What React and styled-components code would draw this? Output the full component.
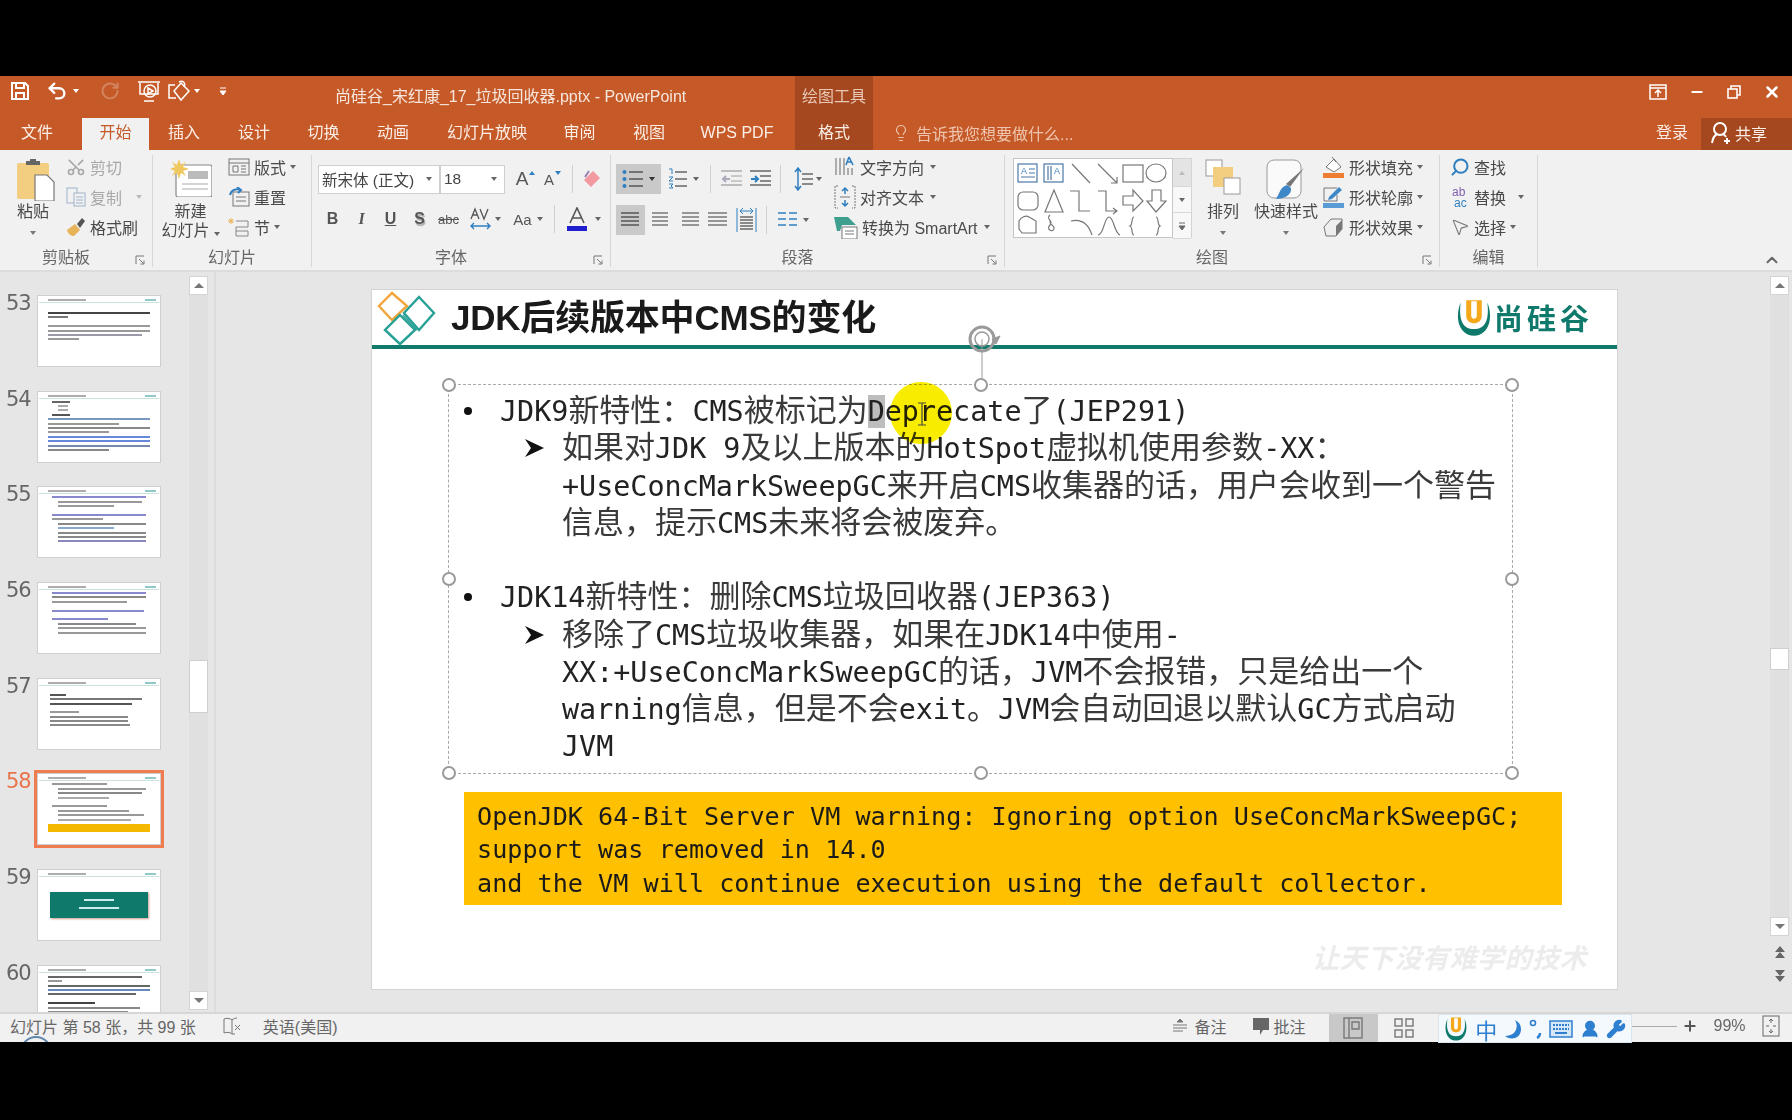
import React from "react";
import styled, { createGlobalStyle } from "styled-components";
import { Scissors, Search, MousePointer2, Lightbulb, Undo2, RotateCw, Minus, X, Wrench, UserRound, Plus, ChevronUp } from "lucide-react";

const UI = `"Liberation Sans", "Noto Sans CJK SC", sans-serif`;
const MONO = `"DejaVu Sans Mono", "Liberation Mono", monospace`;
const CJK = `"Noto Sans CJK SC", sans-serif`;
const ORANGE = "#c55a28";
const DARK = "#a5481f";
const TEAL = "#0f7a6c";
const TXT = "#4a4a4a";

const Global = createGlobalStyle`
  html, body { margin: 0; background: #000; }
  body { font-family: ${UI}; overflow: hidden; }
  * { box-sizing: border-box; }
`;

const Screen = styled.div`
  width: 1792px;
  height: 1120px;
  background: #000;
  padding-top: 76px;
`;
const Win = styled.div`
  height: 966px;
  display: flex;
  flex-direction: column;
  background: #e6e6e6;
`;

/* title bar */
const TitleBar = styled.div`
  height: 42px;
  display: flex;
  background: ${ORANGE};
  color: #f6e6dd;
`;
const Qat = styled.div`
  width: 335px;
  display: flex;
  align-items: center;
  padding: 0 0 12px 10px;
  color: #fff;
`;
const QatSlot = styled.span`
  display: flex;
  align-items: center;
  margin-right: ${(p) => p.$mr || 0}px;
  opacity: ${(p) => p.$dim ? 0.25 : 1};
`;
const TitleText = styled.div`
  width: 460px;
  line-height: 42px;
  font-size: 16px;
  white-space: nowrap;
`;
const ToolTab = styled.div`
  width: 78px;
  background: ${DARK};
  font-size: 16px;
  line-height: 42px;
  text-align: center;
  color: #e8c8b6;
`;
const WinBtns = styled.div`
  margin-left: auto;
  display: flex;
  align-items: center;
  padding: 0 11px 10px 0;
  gap: 22px;
  color: #fff;
`;

/* tabs */
const TabBar = styled.div`
  height: 32px;
  display: flex;
  background: ${ORANGE};
  color: #fbeee7;
  font-size: 16px;
`;
const Tab = styled.div`
  width: ${(p) => p.$w}px;
  text-align: center;
  line-height: 30px;
  padding-right: ${(p) => p.$pr || 0}px;
  white-space: nowrap;
  background: ${(p) => p.$active ? "#f1f1f1" : p.$tool ? DARK : "transparent"};
  color: ${(p) => p.$active ? ORANGE : "#fbeee7"};
`;
const Tell = styled.div`
  display: flex;
  align-items: center;
  gap: 6px;
  margin-left: 19px;
  padding-bottom: 3px;
  font-size: 16px;
  color: #eec4ae;
`;
const Login = styled.div`
  margin-left: auto;
  width: 78px;
  line-height: 30px;
  padding-left: 33px;
  white-space: nowrap;
`;
const Share = styled.div`
  width: 91px;
  background: ${DARK};
  display: flex;
  align-items: center;
  gap: 3px;
  padding: 0 0 3px 9px;
  white-space: nowrap;
`;

/* ribbon */
const Ribbon = styled.div`
  height: 122px;
  display: flex;
  background: #f1f1f1;
  border-bottom: 2px solid #dcdcdc;
  color: ${TXT};
  font-size: 16px;
`;
const Group = styled.section`
  position: relative;
  width: ${(p) => p.$w}px;
  height: 112px;
  margin-top: 5px;
  display: flex;
  flex-direction: column;
  border-right: 1px solid #d6d6d6;
`;
const GroupBody = styled.div`
  height: 97px;
  margin-top: -3px;
  display: flex;
  padding-left: ${(p) => p.$pl || 0}px;
`;
const GroupLabel = styled.div`
  position: relative;
  text-align: center;
  line-height: 18px;
  margin-top: 4px;
  padding-right: ${(p) => p.$pr || 0}px;
  color: #666;
`;
const Launcher = styled.svg`
  position: absolute;
  right: 7px;
  top: 6px;
`;
const BigBtn = styled.div`
  width: ${(p) => p.$w}px;
  display: flex;
  flex-direction: column;
  align-items: center;
  line-height: 19px;
  white-space: nowrap;
`;
const BigIcon = styled.div`
  height: 50px;
  padding-top: 7px;
  margin-left: ${(p) => p.$ml || 0}px;
`;
const BigCaret = styled.i`
  display: block;
  width: 0;
  height: 0;
  margin-top: 10px;
  border-left: 3.5px solid transparent;
  border-right: 3.5px solid transparent;
  border-top: 4px solid #777;
`;
const Stack = styled.div`
  width: ${(p) => p.$w ? `${p.$w}px` : "auto"};
  margin-left: ${(p) => p.$ml || 0}px;
  display: flex;
  flex-direction: column;
`;
const Item = styled.div`
  height: 30px;
  display: flex;
  align-items: center;
  gap: ${(p) => p.$gap ?? 4}px;
  white-space: nowrap;
  color: ${(p) => p.$off ? "#a8a8a8" : TXT};
`;
const Caret = styled.i`
  display: inline-block;
  width: 0;
  height: 0;
  margin-left: ${(p) => p.$ml ?? 5}px;
  border-left: 3.5px solid transparent;
  border-right: 3.5px solid transparent;
  border-top: 4px solid ${(p) => p.$c || "#666"};
`;
const Tools = styled.div`
  display: flex;
  align-items: center;
  height: 30px;
  margin-top: ${(p) => p.$mt || 0}px;
`;
const Tool = styled.div`
  width: ${(p) => p.$w || 29}px;
  height: 30px;
  margin-left: ${(p) => p.$ml || 0}px;
  display: flex;
  align-items: center;
  justify-content: center;
  background: ${(p) => p.$on ? "#c9c9c9" : "transparent"};
  color: #555;
`;
const Vsep = styled.span`
  width: 1px;
  height: 28px;
  margin-left: ${(p) => p.$ml || 0}px;
  background: #d0d0d0;
`;
const SerifGlyph = styled.span`
  font: italic 700 16px "Liberation Serif", serif;
`;
const SansGlyph = styled.span`
  font-family: "Liberation Sans", sans-serif;
  font-size: ${(p) => p.$s || 16}px;
  color: ${(p) => p.$c || "#555"};
  font-weight: ${(p) => p.$b ? 700 : 400};
`;
const Shadowed = styled(SansGlyph)`
  text-shadow: 1px 2px 1px #aaa;
`;
const Struck = styled(SansGlyph)`
  text-decoration: line-through;
`;
const Raised = styled.i`
  display: inline-block;
  width: 0;
  height: 0;
  margin: -12px 0 0 1px;
  border-left: 3.5px solid transparent;
  border-right: 3.5px solid transparent;
  border-${(p) => p.$down ? "top" : "bottom"}: 4px solid #2f7fc0;
`;
const Combo = styled.div`
  width: ${(p) => p.$w}px;
  height: 29px;
  background: #fff;
  border: 1px solid #cfcfcf;
  display: flex;
  align-items: center;
  justify-content: space-between;
  padding: 0 7px 0 3px;
  font-size: 15.5px;
  color: #444;
  white-space: nowrap;
`;
const Gallery = styled.div`
  width: 160px;
  height: 80px;
  margin-top: 6px;
  background: #fff;
  border: 1px solid #c6c6c6;
`;
const GalleryScroll = styled.div`
  width: 19px;
  height: 80px;
  margin-top: 6px;
  display: grid;
  grid-template-rows: 28px 26px 26px;
  border: 1px solid #d4d4d4;
  border-left: 0;
`;
const GalleryCell = styled.div`
  display: flex;
  align-items: center;
  justify-content: center;
  background: ${(p) => p.$dim ? "#e4e4e4" : "#f8f8f8"};
  border-bottom: 1px solid #d8d8d8;
`;
const CaretUp = styled(Caret)`
  border-top: 0;
  border-bottom: 4px solid #bbb;
  margin: 0;
`;
const Rest = styled.div`
  flex: 1;
  display: flex;
  align-items: flex-end;
  justify-content: flex-end;
  padding: 0 11px 1px 0;
  color: #666;
`;

/* main */
const Main = styled.div`
  flex: 1;
  display: flex;
  border-bottom: 2px solid #d6d6d6;
  min-height: 0;
`;
const Panel = styled.aside`
  width: 216px;
  display: flex;
  border-right: 2px solid #dcdcdc;
`;
const ThumbList = styled.div`
  width: 189px;
  height: 740px;
  overflow: hidden;
  padding-top: 23px;
`;
const ThumbRow = styled.div`
  height: 95.7px;
  display: flex;
`;
const Num = styled.div`
  width: 37px;
  padding-left: 6px;
  font: 21px/16px "DejaVu Sans", sans-serif;
  letter-spacing: -1px;
  color: ${(p) => p.$on ? "#e9744a" : "#666"};
`;
const Thumb = styled.div`
  width: 124px;
  height: 72px;
  flex: none;
  background: #fff;
  border: 1px solid #cfcfcf;
  padding: 3px 10px;
  overflow: hidden;
  display: flex;
  flex-direction: column;
  outline: ${(p) => p.$on ? "3px solid #f07d50" : "none"};
`;
const ThumbHead = styled.div`
  display: flex;
  justify-content: space-between;
  height: 4px;
  margin: 0 -9px ${(p) => p.$gap ?? 5}px;
  padding: 0 3px 1px 9px;
  border-bottom: 1px solid #bcdcd6;
  flex: none;
  opacity: 0.8;
`;
const Bar = styled.div`
  height: 2px;
  width: ${(p) => p.$w}%;
  margin: 0 0 2.4px ${(p) => p.$in || 0}px;
  background: ${(p) => p.$c || "#8a8a8a"};
  filter: blur(0.4px);
  flex: none;
`;
const ThumbTeal = styled.div`
  height: 26px;
  margin: 10px 2px 0;
  background: ${TEAL};
  display: flex;
  flex-direction: column;
  align-items: center;
  justify-content: center;
  gap: 3px;
  box-shadow: 1px 1px 2px #c98;
`;
const ThumbYellow = styled.div`
  height: 8px;
  margin: 1px 0 0;
  background: #f5b800;
  flex: none;
`;
const VScroll = styled.div`
  width: 19px;
  margin-top: 4px;
  height: 734px;
  background: #e0e0e0;
  position: relative;
`;
const ScrollBtn = styled.div`
  height: 19px;
  background: #fff;
  border: 1px solid #d4d4d4;
  display: flex;
  align-items: center;
  justify-content: center;
`;
const ScrollEnd = styled(ScrollBtn)`
  position: absolute;
  left: 0;
  right: 0;
  bottom: 0;
`;
const ScrollThumb = styled.div`
  position: absolute;
  left: 0;
  top: ${(p) => p.$top}px;
  width: 19px;
  height: ${(p) => p.$h}px;
  background: #fff;
  border: 1px solid #cfcfcf;
`;
const CaretDown = styled(Caret)`
  margin: 0;
  border-left-width: 5px;
  border-right-width: 5px;
  border-top-width: 5px;
  border-top-color: #777;
`;
const CaretTop = styled(CaretDown)`
  border-top: 0;
  border-bottom: 5px solid #777;
`;
const Canvas = styled.main`
  flex: 1;
  padding: 17px 0 0 155px;
`;
const SlideSheet = styled.div`
  position: relative;
  width: 1247px;
  height: 701px;
  background: #fff;
  border: 1px solid #d4d4d4;
  display: flex;
  flex-direction: column;
`;
const SlideHead = styled.header`
  height: 59px;
  flex: none;
  display: flex;
  align-items: center;
  padding: 0 24px 0 4px;
  border-bottom: 4px solid ${TEAL};
`;
const SlideTitle = styled.h1`
  margin: 0 0 0 15px;
  font: 700 35px/1 ${UI};
  color: #1a1a1a;
  letter-spacing: -0.2px;
  white-space: nowrap;
`;
const Brand = styled.div`
  margin-left: auto;
  display: flex;
  align-items: center;
  font: 700 29px/1 ${CJK};
  color: ${TEAL};
  letter-spacing: 4px;
`;
const TextBox = styled.div`
  position: relative;
  width: 1065px;
  height: 390px;
  margin: 35px 0 0 76px;
  padding-top: 7px;
  border: 1px dashed #a8a8a8;
  color: #222;
  font: 28.4px/37.3px ${MONO};
  flex: none;
`;
const Line = styled.div`
  white-space: nowrap;
  padding-left: ${(p) => p.$lv === 1 ? 51 : 113}px;
  position: relative;
  height: 37.3px;
`;
const Spacer = styled.div`
  height: 37.3px;
`;
const Dot = styled.span`
  position: absolute;
  left: 15px;
  top: 15px;
  width: 8px;
  height: 8px;
  border-radius: 50%;
  background: #111;
`;
const ArrowMark = styled.svg`
  position: absolute;
  left: 75px;
  top: 9px;
`;
const Han = styled.span`
  display: inline-block;
  font-family: ${CJK};
  font-size: 31px;
  line-height: 1;
  color: #3a3a3a;
`;
const Picked = styled.span`
  background: #bdbdbd;
`;
const Spot = styled.div`
  position: absolute;
  left: 441px;
  top: -3px;
  width: 62px;
  height: 62px;
  border-radius: 50%;
  background: #f8ec00;
  mix-blend-mode: multiply;
`;
const Beam = styled.svg`
  position: absolute;
  left: 467px;
  top: 17px;
`;
const Handle = styled.span`
  position: absolute;
  left: ${(p) => p.$x}%;
  top: ${(p) => p.$y}%;
  width: 14px;
  height: 14px;
  margin: -7px 0 0 -7px;
  border-radius: 50%;
  background: #fff;
  border: 2px solid #9a9a9a;
`;
const RotateMark = styled.svg`
  position: absolute;
  left: 516px;
  top: -60px;
`;
const Warning = styled.div`
  width: 1098px;
  height: 113px;
  margin: 18px 0 0 92px;
  padding: 8px 0 0 13px;
  background: #ffc000;
  color: #1a1a1a;
  font: 25.15px/33.4px ${MONO};
  white-space: pre;
  flex: none;
`;
const Motto = styled.div`
  margin: auto 30px 19px auto;
  font: italic 700 27px/1 ${CJK};
  letter-spacing: 0.5px;
  color: #ececec;
  white-space: nowrap;
`;
const RightBar = styled.div`
  width: 22px;
  margin-left: auto;
  padding-top: 4px;
  position: relative;
  display: flex;
  flex-direction: column;
`;
const RightTrack = styled.div`
  height: 660px;
  display: flex;
  flex-direction: column;
  justify-content: space-between;
  width: 19px;
  background: #e0e0e0;
  position: relative;
`;
const PageJump = styled.div`
  width: 19px;
  height: 24px;
  margin-top: ${(p) => p.$mt || 0}px;
  display: flex;
  align-items: center;
  justify-content: center;
`;

/* status bar */
const Status = styled.footer`
  height: 28px;
  display: flex;
  align-items: center;
  background: #f1f1f1;
  color: #666;
  font-size: 16px;
  position: relative;
`;
const StatusText = styled.span`
  margin: 0 0 4px ${(p) => p.$ml || 0}px;
  display: flex;
  align-items: center;
  gap: ${(p) => p.$gap || 5}px;
  white-space: nowrap;
`;
const ViewBtn = styled.div`
  width: ${(p) => p.$w}px;
  height: 28px;
  margin-left: ${(p) => p.$ml || 0}px;
  display: flex;
  align-items: center;
  justify-content: center;
  background: ${(p) => p.$on ? "#c8c8c8" : "transparent"};
`;
const Ime = styled.div`
  width: 194px;
  height: 29px;
  margin: 1px 0 0 16px;
  padding: 0 4px;
  display: flex;
  align-items: center;
  justify-content: space-between;
  background: #f4f9fd;
  border: 1px solid #d8e4ee;
  color: #2f7fd0;
`;
const ImeHan = styled.span`
  font: 22px/1 ${CJK};
  color: #2f7fd0;
`;
const ZoomLine = styled.span`
  width: 45px;
  height: 1px;
  margin-bottom: 4px;
  background: #aaa;
`;
const Arc = styled.span`
  position: absolute;
  left: 20px;
  top: 22px;
  width: 32px;
  height: 32px;
  border: 2px solid #5d86ad;
  border-radius: 50%;
  clip-path: inset(0 0 26px 0);
`;
const Snips = styled(Scissors)`
  transform: rotate(-90deg);
`;
const Glass = styled(Search)`
  transform: scaleX(-1);
`;

/* drawings */
const Svg = ({ w = 20, h = 20, children, ...r }) => (
  <svg width={w} height={h} viewBox={`0 0 ${w} ${h}`} fill="none" {...r}>{children}</svg>
);
const UMark = ({ s = 36 }) => (
  <svg width={s} height={s} viewBox="0 0 36 36">
    <path d="M6 4C1 16 3 33 18 34C33 33 35 16 30 4C32 20 28 28 18 28C8 28 4 20 6 4Z" fill={TEAL} />
    <path d="M11 2V16C11 25 25 25 25 16V2Z" fill="#f5a81c" />
    <path d="M15.5 3V16C15.5 19.5 20.5 19.5 20.5 16V3Z" fill="#fff" />
  </svg>
);
const Diamonds = () => (
  <svg width="60" height="56" viewBox="0 0 60 56" fill="none" strokeWidth="2.4">
    <path d="M16 3L31 16L16 30L3 16Z" stroke="#f0a63c" />
    <path d="M43 7L58 23L43 40L28 23Z" stroke="#27a096" />
    <path d="M24 25L39 40L24 54L9 40Z" stroke="#27a096" />
    <path d="M27 25L41 40" stroke="#27a096" strokeWidth="1.4" />
  </svg>
);
const Launch = () => (
  <Launcher width="10" height="10" viewBox="0 0 10 10" fill="none" stroke="#777">
    <path d="M1 9V1H9" /><path d="M4 4L8.5 8.5M5.5 9H9V5.5" />
  </Launcher>
);
const Lines = ({ x = 0, y, n, w = 18, gap = 6, c = "#777", sw = 1.5 }) => (
  <>{Array.from({ length: n }, (_, i) => <path key={i} d={`M${x} ${y + i * gap}H${x + w}`} stroke={c} strokeWidth={sw} />)}</>
);
const Shapes = () => (
  <svg width="158" height="78" viewBox="0 0 158 78" fill="none" stroke="#777" strokeWidth="1.2">
    <rect x="4" y="5" width="19" height="18" stroke="#4a78a8" /><path d="M15 10h6M15 14h6M7 18h14" stroke="#4a78a8" />
    <text x="7" y="15" fontFamily="Liberation Sans" fontSize="9" fill="#3f7fc0" stroke="none">A</text>
    <rect x="30" y="5" width="19" height="18" stroke="#4a78a8" /><path d="M34 7v14M37 7v14" stroke="#4a78a8" />
    <text x="40" y="15" fontFamily="Liberation Sans" fontSize="9" fill="#3f7fc0" stroke="none">A</text>
    <path d="M58 5L76 24" /><path d="M84 5L103 24M103 18V24H97" />
    <rect x="109" y="6" width="20" height="17" /><ellipse cx="142" cy="14" rx="10" ry="9" />
    <rect x="4" y="33" width="20" height="18" rx="5" /><path d="M40 31L31 53H49Z" />
    <path d="M56 32H65V52H76" /><path d="M84 32H92V52H102M99 49L103 52L99 55" />
    <path d="M109 37H119V31L129 42L119 52V46H109Z" /><path d="M138 31H147V42H152L142 53L133 42H138Z" />
    <path d="M5 62C7 58 12 56 15 58L22 62V74H8L5 70Z" /><path d="M36 56C31 60 40 62 36 66C32 70 38 74 40 70C41 66 35 66 36 62" />
    <path d="M57 62C66 60 74 64 78 76" /><path d="M84 76C90 76 90 58 95 58C100 58 100 74 106 76" />
    <path d="M120 58C117 58 119 66 116 67C119 68 117 76 120 76" /><path d="M142 58C145 58 143 66 146 67C143 68 145 76 142 76" />
  </svg>
);

const split = (t) => t.split(/([\u3000-\u9fff\uff00-\uffef]+)/).map((p, i) => i % 2 ? <Han key={i}>{p}</Han> : p);

const Point = ({ lv, mark, children }) => (
  <Line $lv={lv}>
    {mark && (lv === 1 ? <Dot /> : (
      <ArrowMark width="21" height="20" viewBox="0 0 21 20"><path d="M1 1L20 10L1 19L7 10Z" fill="#111" /></ArrowMark>
    ))}
    {children}
  </Line>
);

const thumbs = [
  { n: 53, gap: 9, bars: [[100, 0, "#444"], [20, 0, "#777"], [0], [100, 0, "#999"], [100, 0, "#999"], [92, 0, "#99a"], [30, 0, "#999"]] },
  { n: 54, gap: 2, bars: [[18, 4, "#666"], [10, 10, "#aaa"], [10, 10, "#aaa"], [18, 4, "#555"], [100, 0, "#79b"], [70, 0, "#999"], [100, 0, "#888"], [60, 0, "#999"], [100, 0, "#68d"], [100, 0, "#68d"], [100, 0, "#78a"], [60, 0, "#888"]] },
  { n: 55, gap: 2, bars: [[92, 4, "#88c"], [82, 10, "#999"], [55, 10, "#999"], [0], [92, 4, "#88c"], [50, 4, "#999"], [86, 10, "#888"], [55, 10, "#8ac"], [86, 10, "#888"], [86, 10, "#888"], [86, 10, "#88b"]] },
  { n: 56, gap: 2, bars: [[92, 4, "#88c"], [92, 4, "#888"], [74, 4, "#999"], [0], [90, 4, "#88c"], [0], [55, 4, "#88c"], [76, 10, "#888"], [86, 10, "#999"], [86, 10, "#999"]] },
  { n: 57, gap: 8, bars: [[16, 2, "#555"], [90, 2, "#777"], [80, 2, "#555"], [0], [28, 2, "#999"], [76, 2, "#888"], [76, 2, "#888"], [78, 2, "#888"]] },
  { n: 58, on: true, gap: 2, bars: [[54, 4, "#999"], [86, 10, "#999"], [82, 10, "#888"], [50, 10, "#aaa"], [0], [54, 4, "#999"], [70, 10, "#999"], [84, 10, "#999"], [72, 10, "#aaa"]], yellow: true },
  { n: 59, teal: true },
  { n: 60, gap: 3, bars: [[92, 0, "#666"], [14, 0, "#999"], [100, 0, "#666"], [100, 0, "#68b"], [86, 0, "#666"], [0], [46, 0, "#444"], [90, 0, "#888"], [78, 0, "#888"]] },
];

export default function App() {
  return (
    <Screen>
      <Global />
      <Win>
        <TitleBar>
          <Qat>
            <QatSlot $mr={16}>
              <Svg w={20} h={20} stroke="#fff" strokeWidth="2"><path d="M2 2H15L18 5V18H2Z" /><path d="M6 2V7H14V2M6 18V12H14V18" /></Svg>
            </QatSlot>
            <QatSlot $mr={5}><Undo2 size={22} strokeWidth={2.6} /></QatSlot>
            <QatSlot $mr={21}><Caret $ml={0} $c="#fff" /></QatSlot>
            <QatSlot $mr={17} $dim><RotateCw size={20} strokeWidth={2.4} /></QatSlot>
            <QatSlot $mr={6}>
              <Svg w={24} h={24} stroke="#fff" strokeWidth="1.5"><path d="M1 3H23M3 4V15H21V4" /><circle cx="13" cy="12" r="6" /><path d="M11 9L16 12L11 15Z" /><path d="M7 22H17" /></Svg>
            </QatSlot>
            <QatSlot $mr={3}>
              <Svg w={24} h={22} stroke="#fff" strokeWidth="1.5"><path d="M8 5H2V18H9" /><path d="M14 3L22 11L14 20L7 11Z" /><path d="M12 2C16 0 19 3 17 7" /></Svg>
            </QatSlot>
            <QatSlot $mr={18}><Caret $ml={0} $c="#fff" /></QatSlot>
            <QatSlot>
              <Svg w={10} h={12} stroke="#fff" strokeWidth="1"><path d="M2 3H8" /><path d="M2 6L5 10L8 6Z" fill="#fff" /></Svg>
            </QatSlot>
          </Qat>
          <TitleText>尚硅谷_宋红康_17_垃圾回收器.pptx - PowerPoint</TitleText>
          <ToolTab>绘图工具</ToolTab>
          <WinBtns>
            <Svg w={18} h={16} stroke="#fff" strokeWidth="1.5"><rect x="1" y="1" width="16" height="14" /><path d="M1 4H17M9 13V7M6 9L9 6L12 9" /></Svg>
            <Minus size={16} strokeWidth={3} />
            <Svg w={14} h={14} stroke="#fff" strokeWidth="1.6"><rect x="1" y="4" width="9" height="9" /><path d="M4 4V1H13V10H10" /></Svg>
            <X size={18} strokeWidth={3.4} />
          </WinBtns>
        </TitleBar>

        <TabBar>
          <Tab $w={82} $pr={8}>文件</Tab>
          <Tab $w={67} $active>开始</Tab>
          <Tab $w={70}>插入</Tab>
          <Tab $w={70}>设计</Tab>
          <Tab $w={69}>切换</Tab>
          <Tab $w={70}>动画</Tab>
          <Tab $w={118}>幻灯片放映</Tab>
          <Tab $w={67}>审阅</Tab>
          <Tab $w={72}>视图</Tab>
          <Tab $w={110} $pr={6}>WPS PDF</Tab>
          <Tab $w={78} $tool>格式</Tab>
          <Tell><Lightbulb size={18} strokeWidth={1.6} />告诉我您想要做什么...</Tell>
          <Login>登录</Login>
          <Share>
            <Svg w={22} h={24} stroke="#fff" strokeWidth="2"><circle cx="10" cy="8" r="6" /><path d="M2 22C3 16 5 14 7 13M13 13C14 14 15 14 16 16M17 17V23M14 20H20" /></Svg>
            共享
          </Share>
        </TabBar>

        <Ribbon>
          <Group $w={153}>
            <GroupBody>
              <BigBtn $w={66}>
                <BigIcon $ml={6}>
                  <Svg w={38} h={42}>
                    <rect x="0" y="4" width="32" height="36" rx="2" fill="#f3cd80" />
                    <path d="M9 6H23V2H9Z" fill="#666" /><rect x="13" y="0" width="6" height="3" fill="#666" />
                    <path d="M18 16H30L37 23V42H18Z" fill="#fff" stroke="#777" strokeWidth="1.2" />
                  </Svg>
                </BigIcon>
                粘贴
                <BigCaret />
              </BigBtn>
              <Stack>
                <Item $off><Snips size={20} color="#a8a8a8" />剪切</Item>
                <Item $off>
                  <Svg w={20} h={20} stroke="#9fb4cc"><rect x="1" y="1" width="10" height="15" /><rect x="8" y="6" width="11" height="13" fill="#f1f1f1" /><path d="M10 10H17M10 13H17M10 16H17" /></Svg>
                  复制<Caret $ml={10} $c="#bbb" />
                </Item>
                <Item>
                  <Svg w={20} h={20}><path d="M1 13L9 7L14 13L8 19C5 19 2 17 1 13Z" fill="#e8b45a" /><path d="M11 7L16 1L19 4L14 11Z" fill="#555" /></Svg>
                  格式刷
                </Item>
              </Stack>
            </GroupBody>
            <GroupLabel $pr={20}>剪贴板<Launch /></GroupLabel>
          </Group>

          <Group $w={159}>
            <GroupBody>
              <BigBtn $w={75}>
                <BigIcon>
                  <Svg w={42} h={38}>
                    <rect x="6" y="6" width="36" height="32" rx="2" fill="#fff" stroke="#888" strokeWidth="1.2" />
                    <path d="M9 0L11 6L16 3L13 8L19 10L13 12L16 17L11 14L9 20L7 14L2 17L5 12L0 10L5 8L2 3L7 6Z" fill="#f0c860" />
                    <rect x="18" y="12" width="20" height="8" fill="#bbb" /><path d="M12 25H38M12 30H38" stroke="#aaa" />
                  </Svg>
                </BigIcon>
                新建
                <span>幻灯片<Caret $ml={4} /></span>
              </BigBtn>
              <Stack>
                <Item>
                  <Svg w={22} h={20} stroke="#777"><rect x="1" y="2" width="20" height="16" /><path d="M1 6H21M5 9H10V15H5ZM13 9H18M13 12H18M13 15H18" /></Svg>
                  版式<Caret $ml={0} />
                </Item>
                <Item>
                  <Svg w={22} h={20} stroke="#777"><rect x="5" y="5" width="16" height="14" /><path d="M8 10H18M8 14H18" /><path d="M2 8C3 3 8 1 13 3M9 0L13 3L10 6" stroke="#2f7fc0" strokeWidth="2" /></Svg>
                  重置
                </Item>
                <Item>
                  <Svg w={22} h={20} stroke="#888"><path d="M8 4H20V10H8V19H20V14H8" /><path d="M3 1V7M0 4H6M1 2L5 6M5 2L1 6" stroke="#e8b45a" /></Svg>
                  节<Caret $ml={0} />
                </Item>
              </Stack>
            </GroupBody>
            <GroupLabel>幻灯片</GroupLabel>
          </Group>

          <Group $w={299}>
            <GroupBody $pl={6}>
              <Stack>
                <Tools $mt={12}>
                  <Combo $w={122}>新宋体 (正文)<Caret /></Combo>
                  <Combo $w={65}>18<Caret /></Combo>
                  <Tool $ml={6}><SansGlyph $s={19}>A</SansGlyph><Raised /></Tool>
                  <Tool $w={25}><SansGlyph $s={15}>A</SansGlyph><Raised $down /></Tool>
                  <Vsep $ml={7} />
                  <Tool $w={30} $ml={4}>
                    <Svg w={20} h={20}><path d="M2 11L11 2L18 9L9 18Z" fill="#f29aa0" /><path d="M7 2L3 8" stroke="#9a7fb0" strokeWidth="2" /></Svg>
                  </Tool>
                </Tools>
                <Tools $mt={10}>
                  <Tool><SansGlyph $b>B</SansGlyph></Tool>
                  <Tool><SerifGlyph>I</SerifGlyph></Tool>
                  <Tool><SansGlyph as="u" $b>U</SansGlyph></Tool>
                  <Tool><Shadowed $b>S</Shadowed></Tool>
                  <Tool><Struck $s={13}>abc</Struck></Tool>
                  <Tool $w={44}>
                    <Svg w={22} h={24}><path d="M1 12L5 2L9 12M3 8H7M10 2L14 12L18 2" stroke="#555" strokeWidth="1.3" /><path d="M1 19H20M4 16L1 19L4 22M17 16L20 19L17 22" stroke="#2f7fc0" strokeWidth="1.4" /></Svg>
                    <Caret $ml={3} />
                  </Tool>
                  <Tool $w={42}><SansGlyph $s={15}>Aa</SansGlyph><Caret /></Tool>
                  <Vsep $ml={5} />
                  <Tool $w={32} $ml={6}>
                    <Svg w={22} h={24}><path d="M4 16L11 1L18 16M7 11H15" stroke="#555" strokeWidth="1.6" /><rect x="1" y="19" width="20" height="5" fill="#1f1fd0" /></Svg>
                  </Tool>
                  <Caret $ml={2} />
                </Tools>
              </Stack>
            </GroupBody>
            <GroupLabel $pr={20}>字体<Launch /></GroupLabel>
          </Group>

          <Group $w={394}>
            <GroupBody $pl={5}>
              <Stack $w={218}>
                <Tools $mt={12}>
                  <Tool $w={45} $on>
                    <Svg w={22} h={22}><Lines x={7} y={4} n={3} w={14} gap={7} c="#555" /><circle cx="2.5" cy="4" r="2" fill="#2f7fc0" /><circle cx="2.5" cy="11" r="2" fill="#2f7fc0" /><circle cx="2.5" cy="18" r="2" fill="#2f7fc0" /></Svg>
                    <Caret $c="#333" />
                  </Tool>
                  <Tool $w={34} $ml={5}>
                    <Svg w={20} h={22}><Lines x={7} y={4} n={3} w={12} gap={7} c="#666" /><path d="M1 1H4V6M1 9H5L1 13H5M1 16H5L3 18L5 20H1" stroke="#2f7fc0" /></Svg>
                    <Caret />
                  </Tool>
                  <Vsep $ml={10} />
                  <Tool $w={23} $ml={9}>
                    <Svg w={22} h={20}><Lines x={0} y={2} n={2} w={21} gap={14} c="#aaa" /><Lines x={10} y={7} n={2} w={11} gap={5} c="#bbb" /><path d="M9 10H2M5 7L2 10L5 13" stroke="#aab" strokeWidth="2" /></Svg>
                  </Tool>
                  <Tool $w={23} $ml={6}>
                    <Svg w={22} h={20}><Lines x={0} y={2} n={2} w={21} gap={14} c="#666" /><Lines x={10} y={7} n={2} w={11} gap={5} c="#666" /><path d="M1 10H8M5 7L8 10L5 13" stroke="#2f7fc0" strokeWidth="2" /></Svg>
                  </Tool>
                  <Vsep $ml={8} />
                  <Tool $w={34} $ml={10}>
                    <Svg w={20} h={24}><Lines x={8} y={7} n={3} w={11} gap={5} c="#666" /><path d="M4 2V22M1 5L4 1L7 5M1 19L4 23L7 19" stroke="#2f7fc0" strokeWidth="1.5" /></Svg>
                    <Caret $ml={2} />
                  </Tool>
                </Tools>
                <Tools $mt={11}>
                  <Tool $w={29} $on><Svg w={20} h={20}><Lines y={3} n={4} w={18} gap={4} c="#555" /></Svg></Tool>
                  <Tool $w={20} $ml={5}><Svg w={20} h={20}><Lines x={2} y={3} n={4} w={16} gap={4} c="#777" /></Svg></Tool>
                  <Tool $w={21} $ml={9}><Svg w={20} h={20}><Lines x={2} y={3} n={4} w={17} gap={4} c="#777" /></Svg></Tool>
                  <Tool $w={20} $ml={8}><Svg w={20} h={20}><Lines y={3} n={4} w={19} gap={4} c="#777" /></Svg></Tool>
                  <Tool $w={21} $ml={8}>
                    <Svg w={21} h={26}><path d="M1 1V25M20 1V25" stroke="#2f7fc0" /><path d="M4 4H17M7 1L4 4L7 7M14 1L17 4L14 7" stroke="#2f7fc0" /><Lines x={4} y={10} n={5} w={13} gap={3} c="#666" /></Svg>
                  </Tool>
                  <Vsep $ml={9} />
                  <Tool $w={33} $ml={10}>
                    <Svg w={20} h={20}><Lines y={3} n={3} w={8} gap={6} c="#2f7fc0" /><Lines x={11} y={3} n={3} w={8} gap={6} c="#2f7fc0" /></Svg>
                    <Caret />
                  </Tool>
                </Tools>
              </Stack>
              <Stack>
                <Item>
                  <Svg w={22} h={24}><path d="M2 3V20M6 3V20M10 3V20" stroke="#666" /><path d="M14 13V20M18 13V20" stroke="#666" /><path d="M15 2L12 10M15 2L19 10M13 7H18" stroke="#2f7fc0" strokeWidth="1.6" /></Svg>
                  文字方向<Caret $ml={2} />
                </Item>
                <Item>
                  <Svg w={22} h={24}><path d="M4 1H1V23H4M18 1H21V23H18" stroke="#777" strokeDasharray="2 1" /><path d="M11 3V9M8 6L11 3L14 6M11 21V15M8 18L11 21L14 18" stroke="#2f7fc0" strokeWidth="1.5" /><path d="M6 12H16" stroke="#777" /></Svg>
                  对齐文本<Caret $ml={2} />
                </Item>
                <Item>
                  <Svg w={24} h={24}><path d="M0 2H14L22 10H8L6 16H3Z" fill="#3f9f8e" /><rect x="8" y="12" width="15" height="12" fill="#fff" stroke="#777" /><path d="M11 16H20M11 19H20" stroke="#777" /></Svg>
                  转换为 SmartArt<Caret $ml={2} />
                </Item>
              </Stack>
            </GroupBody>
            <GroupLabel $pr={20}>段落<Launch /></GroupLabel>
          </Group>

          <Group $w={435}>
            <GroupBody $pl={8}>
              <Gallery><Shapes /></Gallery>
              <GalleryScroll>
                <GalleryCell $dim><CaretUp /></GalleryCell>
                <GalleryCell><Caret $ml={0} /></GalleryCell>
                <GalleryCell><Svg w={10} h={10} stroke="#666"><path d="M2 2H8" /><path d="M2 5L5 9L8 5Z" fill="#666" /></Svg></GalleryCell>
              </GalleryScroll>
              <BigBtn $w={62}>
                <BigIcon>
                  <Svg w={36} h={36}><rect x="1" y="1" width="16" height="16" fill="#fff" stroke="#999" /><rect x="8" y="8" width="20" height="20" fill="#f3cd80" /><rect x="19" y="19" width="16" height="16" fill="#fff" stroke="#999" /></Svg>
                </BigIcon>
                排列
                <BigCaret />
              </BigBtn>
              <BigBtn $w={64}>
                <BigIcon>
                  <Svg w={40} h={42}>
                    <rect x="1" y="1" width="34" height="38" rx="7" fill="#fafafa" stroke="#999" />
                    <path d="M38 9L24 28L20 25Z" fill="#777" /><path d="M21 26C14 28 14 34 10 40C18 40 26 36 25 29Z" fill="#3f88c8" />
                  </Svg>
                </BigIcon>
                快速样式
                <BigCaret />
              </BigBtn>
              <Stack $ml={5}>
                <Item>
                  <Svg w={22} h={22}><path d="M3 11L11 3L18 11L11 16Z" fill="#fff" stroke="#777" /><path d="M9 1L13 6" stroke="#777" /><rect x="0" y="17" width="21" height="5" fill="#ed7d31" /></Svg>
                  形状填充<Caret $ml={0} />
                </Item>
                <Item>
                  <Svg w={22} h={22}><path d="M14 2H1V15H14V9" stroke="#777" /><path d="M6 11L16 1L19 4L9 13L5 14Z" fill="#3f88c8" /><rect x="0" y="17" width="21" height="5" fill="#5b9bd5" /></Svg>
                  形状轮廓<Caret $ml={0} />
                </Item>
                <Item>
                  <Svg w={22} h={22}><path d="M1 11L8 3H19V13L13 20H3Z" fill="#eee" stroke="#777" /><path d="M19 4V13L13 20V10Z" fill="#777" /></Svg>
                  形状效果<Caret $ml={0} />
                </Item>
              </Stack>
            </GroupBody>
            <GroupLabel $pr={20}>绘图<Launch /></GroupLabel>
          </Group>

          <Group $w={98}>
            <GroupBody $pl={10}>
              <Stack>
                <Item><Glass size={20} color="#2f7fc0" strokeWidth={2.4} />查找</Item>
                <Item>
                  <Svg w={20} h={22}><text x="2" y="10" fontFamily="Liberation Sans" fontSize="12" fill="#8060b0">ab</text><text x="4" y="21" fontFamily="Liberation Sans" fontSize="12" fill="#2f7fc0">ac</text></Svg>
                  替换<Caret $ml={8} />
                </Item>
                <Item><MousePointer2 size={20} color="#777" strokeWidth={1.3} />选择<Caret $ml={0} /></Item>
              </Stack>
            </GroupBody>
            <GroupLabel>编辑</GroupLabel>
          </Group>

          <Rest><ChevronUp size={18} strokeWidth={2.6} /></Rest>
        </Ribbon>

        <Main>
          <Panel>
            <ThumbList>
              {thumbs.map((t) => (
                <ThumbRow key={t.n}>
                  <Num $on={t.on}>{t.n}</Num>
                  <Thumb $on={t.on}>
                    <ThumbHead $gap={t.gap}>
                      <Bar $w={35} $c="#999" />
                      <Bar $w={10} $c="#7bb" />
                    </ThumbHead>
                    {t.teal && (
                      <ThumbTeal><Bar $w={30} $c="#cee" /><Bar $w={40} $c="#cee" /></ThumbTeal>
                    )}
                    {t.bars && t.bars.map(([w, ind, c], i) => (
                      <Bar key={i} $w={w || 1} $in={ind} $c={w ? c : "transparent"} />
                    ))}
                    {t.yellow && <ThumbYellow />}
                  </Thumb>
                </ThumbRow>
              ))}
            </ThumbList>
            <VScroll>
              <ScrollBtn><CaretTop /></ScrollBtn>
              <ScrollThumb $top={384} $h={53} />
              <ScrollEnd><CaretDown /></ScrollEnd>
            </VScroll>
          </Panel>

          <Canvas>
            <SlideSheet>
              <SlideHead>
                <Diamonds />
                <SlideTitle>JDK后续版本中CMS的变化</SlideTitle>
                <Brand><UMark s={40} />尚硅谷</Brand>
              </SlideHead>
              <TextBox>
                <Point lv={1} mark>JDK9{split("新特性：")}CMS{split("被标记为")}<Picked>D</Picked>eprecate{split("了")}(JEP291)</Point>
                <Point lv={2} mark>{split("如果对")}JDK 9{split("及以上版本的")}HotSpot{split("虚拟机使用参数")}-XX{split("：")}</Point>
                <Point lv={2}>+UseConcMarkSweepGC{split("来开启")}CMS{split("收集器的话，用户会收到一个警告")}</Point>
                <Point lv={2}>{split("信息，提示")}CMS{split("未来将会被废弃。")}</Point>
                <Spacer />
                <Point lv={1} mark>JDK14{split("新特性：删除")}CMS{split("垃圾回收器")}(JEP363)</Point>
                <Point lv={2} mark>{split("移除了")}CMS{split("垃圾收集器，如果在")}JDK14{split("中使用")}-</Point>
                <Point lv={2}>XX:+UseConcMarkSweepGC{split("的话，")}JVM{split("不会报错，只是给出一个")}</Point>
                <Point lv={2}>warning{split("信息，但是不会")}exit{split("。")}JVM{split("会自动回退以默认")}GC{split("方式启动")}</Point>
                <Point lv={2}>JVM</Point>
                <Spot />
                <Beam width="12" height="24" viewBox="0 0 12 24" fill="none" stroke="#444" strokeWidth="1.2"><path d="M2 1H10M6 1V23M2 23H10" /></Beam>
                {[[0, 0], [50, 0], [100, 0], [0, 50], [100, 50], [0, 100], [50, 100], [100, 100]].map(([x, y]) => (
                  <Handle key={`${x}-${y}`} $x={x} $y={y} />
                ))}
                <RotateMark width="36" height="60" viewBox="0 0 36 60" fill="none" stroke="#9a9a9a">
                  <path d="M17 14V53" />
                  <circle cx="17" cy="14" r="12" strokeWidth="3" />
                  <circle cx="17" cy="14" r="7" strokeWidth="1.5" />
                  <path d="M27 14L35 11L31 19Z" fill="#9a9a9a" />
                </RotateMark>
              </TextBox>
              <Warning>{`OpenJDK 64-Bit Server VM warning: Ignoring option UseConcMarkSweepGC;
support was removed in 14.0
and the VM will continue execution using the default collector.`}</Warning>
              <Motto>让天下没有难学的技术</Motto>
            </SlideSheet>
          </Canvas>

          <RightBar>
            <RightTrack>
              <ScrollBtn><CaretTop /></ScrollBtn>
              <ScrollThumb $top={372} $h={22} />
              <ScrollBtn><CaretDown /></ScrollBtn>
            </RightTrack>
            <PageJump $mt={4}>
              <Svg w={14} h={14}><path d="M7 1L12 7H2ZM7 7L12 13H2Z" fill="#666" /></Svg>
            </PageJump>
            <PageJump>
              <Svg w={14} h={14}><path d="M2 1H12L7 7ZM2 7H12L7 13Z" fill="#666" /></Svg>
            </PageJump>
          </RightBar>
        </Main>

        <Status>
          <Arc />
          <StatusText $ml={10}>幻灯片 第 58 张，共 99 张</StatusText>
          <StatusText $ml={27}>
            <Svg w={18} h={18} stroke="#777"><path d="M9 3C7 1 3 1 1 2V16C3 15 7 15 9 17V3ZM9 3C10 2 12 1 14 1M9 17H12" /><path d="M12 8L17 13M17 8L12 13" /></Svg>
          </StatusText>
          <StatusText $ml={22}>英语(美国)</StatusText>
          <StatusText $ml={835} $gap={8}>
            <Svg w={14} h={16} stroke="#777"><path d="M7 1L10 4H4Z" fill="#777" /><path d="M0 7H14M0 10H14M0 13H10" /></Svg>
            备注
          </StatusText>
          <StatusText $ml={25} $gap={4}>
            <Svg w={18} h={18}><path d="M1 1H17V13H11L8 18V13H1Z" fill="#666" /></Svg>
            批注
          </StatusText>
          <ViewBtn $w={49} $ml={23} $on>
            <Svg w={20} h={22} stroke="#777" strokeWidth="1.4"><rect x="1" y="1" width="18" height="20" /><path d="M6 1V21M9 5H16V12H9Z" /></Svg>
          </ViewBtn>
          <ViewBtn $w={36} $ml={8}>
            <Svg w={20} h={20} stroke="#777" strokeWidth="1.4"><rect x="1" y="1" width="7" height="7" /><rect x="12" y="1" width="7" height="7" /><rect x="1" y="12" width="7" height="7" /><rect x="12" y="12" width="7" height="7" /></Svg>
          </ViewBtn>
          <Ime>
            <UMark s={26} />
            <ImeHan>中</ImeHan>
            <Svg w={18} h={20}><path d="M11 1C15 8 12 17 1 17C5 21 17 21 17 10C17 6 15 3 11 1Z" fill="#2f7fd0" /></Svg>
            <Svg w={14} h={20} stroke="#2f7fd0" strokeWidth="1.6"><circle cx="4" cy="4" r="2.5" /><path d="M11 14C11 16 10 18 8 19" strokeWidth="2.4" /></Svg>
            <Svg w={24} h={18}>
              <rect x="1" y="1" width="22" height="16" fill="#d6e8f8" stroke="#2f7fd0" strokeWidth="1.5" />
              <path d="M4 5H20M4 9H20" stroke="#2f7fd0" strokeWidth="2" strokeDasharray="2 1" />
              <path d="M6 13H18" stroke="#2f7fd0" strokeWidth="2" />
            </Svg>
            <UserRound size={20} fill="#2f7fd0" />
            <Wrench size={20} fill="#2f7fd0" />
          </Ime>
          <ZoomLine />
          <StatusText $ml={5}><Plus size={16} strokeWidth={3} color="#555" /></StatusText>
          <StatusText $ml={16}>99%</StatusText>
          <StatusText $ml={16}>
            <Svg w={18} h={22} stroke="#666"><rect x="1" y="1" width="16" height="20" /><path d="M9 4V8M7 6L9 4L11 6M9 18V14M7 16L9 18L11 16M4 11H7M14 11H11" /></Svg>
          </StatusText>
        </Status>
      </Win>
    </Screen>
  );
}
